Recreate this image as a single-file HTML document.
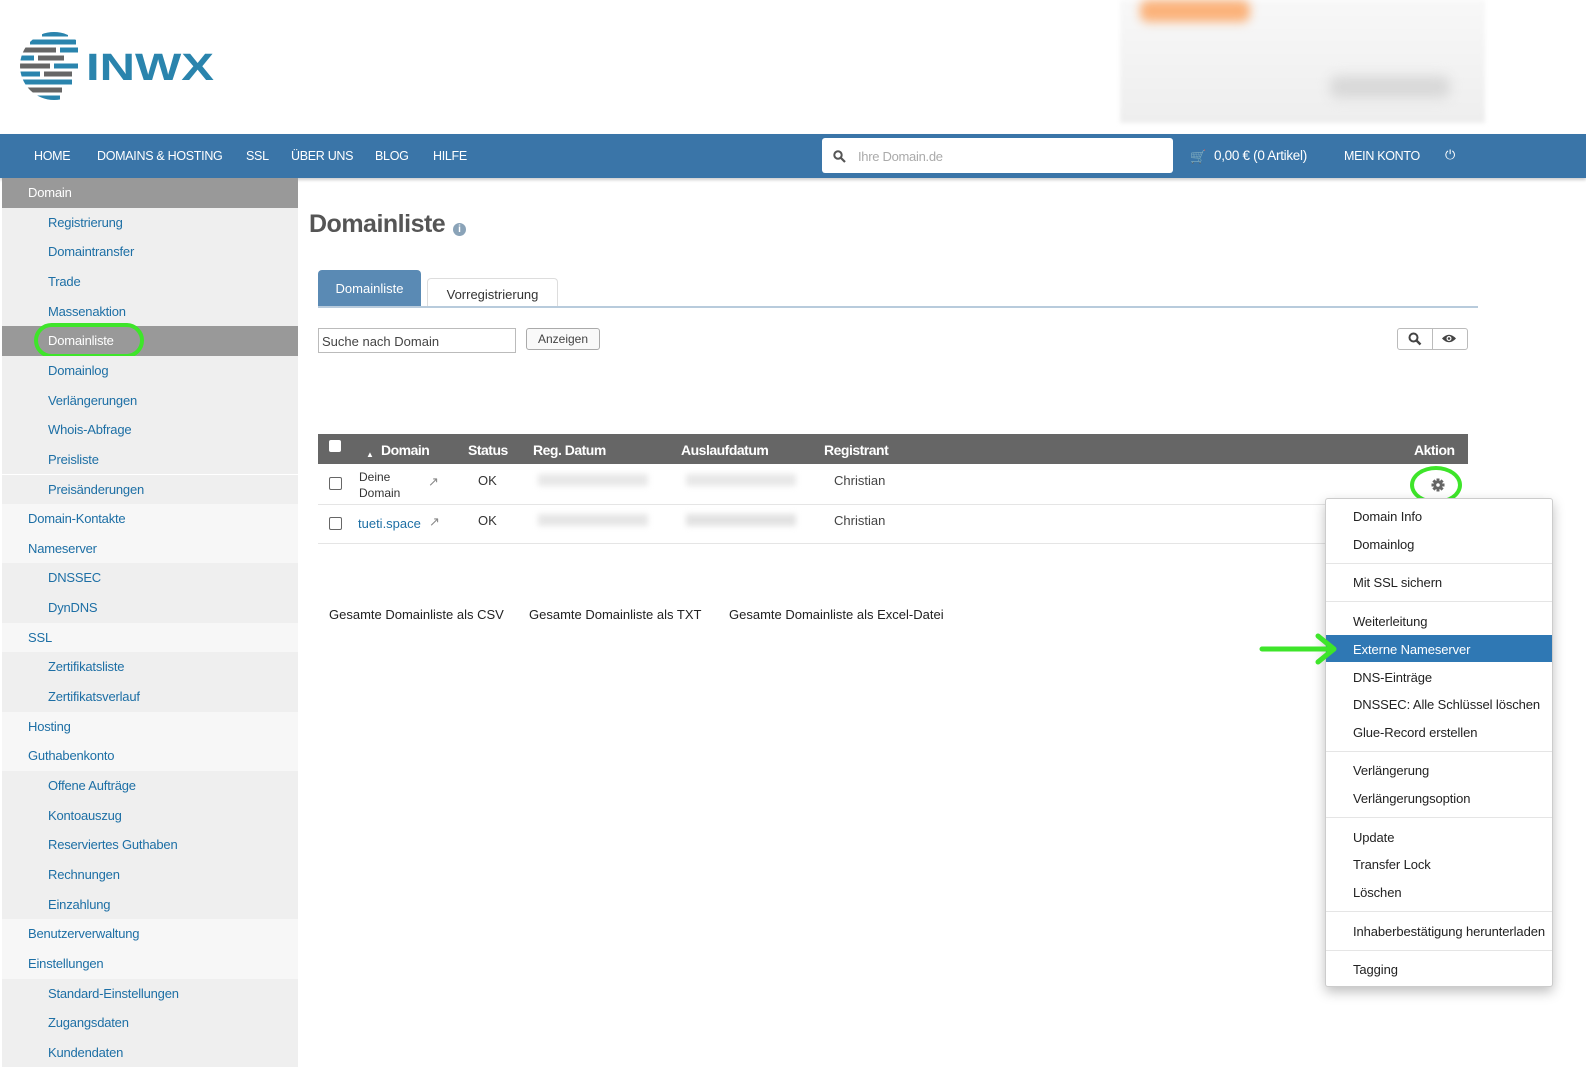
<!DOCTYPE html>
<html><head><meta charset="utf-8"><style>
*{margin:0;padding:0;box-sizing:border-box}
body{width:1586px;height:1083px;background:#fff;font-family:"Liberation Sans",sans-serif;position:relative;overflow:hidden;color:#333}
.a{position:absolute;white-space:nowrap}
.nav{position:absolute;left:0;top:134px;width:1586px;height:44px;background:#3a75a8;box-shadow:0 2px 3px rgba(0,0,0,.2)}
.nav span{position:absolute;top:15px;color:#fff;font-size:12.5px;letter-spacing:-.3px}
.sb{position:absolute;left:2px;width:296px;height:29.65px;font-size:13px;color:#1d6fa5;letter-spacing:-.2px;line-height:29.65px}
.s1{background:#f7f7f7;padding-left:26px}
.s2{background:#efefef;padding-left:46px}
.th{position:absolute;top:434px;left:318px;width:1150px;height:30px;background:#666}
.th span{position:absolute;top:8px;color:#fff;font-size:14px;font-weight:bold;letter-spacing:-.5px}
.dd{position:absolute;left:1325px;top:498px;width:228px;height:489px;background:#fff;border:1px solid #ccc;border-radius:3px;box-shadow:0 5px 12px rgba(0,0,0,.25)}
.dd span{position:absolute;left:27px;font-size:13px;color:#222;white-space:nowrap;letter-spacing:-.1px}
.dd i{position:absolute;left:0;width:226px;height:1px;background:#e5e5e5}
</style></head><body>
<!-- logo -->
<svg class="a" style="left:20px;top:30px" width="200" height="72" viewBox="0 0 200 72">
<defs><clipPath id="g"><circle cx="34" cy="36" r="34"/></clipPath></defs>
<g stroke-width="5" clip-path="url(#g)">
<path d="M22 4 H48" stroke="#2a84ad"/><path d="M10 12 H56" stroke="#2a84ad"/>
<path d="M0 20 H36" stroke="#666"/><path d="M40 20 H58" stroke="#2a84ad"/>
<path d="M0 28 H14" stroke="#2a84ad"/><path d="M18 28 H44" stroke="#666"/>
<path d="M0 36 H30" stroke="#666"/><path d="M34 36 H58" stroke="#2a84ad"/>
<path d="M0 44 H20" stroke="#2a84ad"/><path d="M24 44 H52" stroke="#666"/>
<path d="M0 52 H52" stroke="#2a84ad"/><path d="M0 60 H42" stroke="#666"/><path d="M0 68 H40" stroke="#2a84ad"/>
</g>
<text x="66" y="50" font-family="Liberation Sans" font-weight="bold" font-size="38" fill="#2a84ad" textLength="128" lengthAdjust="spacingAndGlyphs">INWX</text>
</svg>
<!-- blurred ad -->
<div class="a" style="left:1120px;top:0;width:365px;height:123px;background:linear-gradient(#f8f8f8,#eee);filter:blur(2px)"></div>
<div class="a" style="left:1140px;top:0;width:110px;height:22px;background:#fbb27a;border-radius:8px;filter:blur(5px)"></div>
<div class="a" style="left:1330px;top:76px;width:120px;height:22px;background:#d8d8d8;border-radius:8px;filter:blur(6px)"></div>
<div class="nav">
<span style="left:34px">HOME</span><span style="left:97px">DOMAINS &amp; HOSTING</span><span style="left:246px">SSL</span><span style="left:291px">ÜBER UNS</span><span style="left:375px">BLOG</span><span style="left:433px">HILFE</span>
<div class="a" style="left:822px;top:4px;width:351px;height:35px;background:#fff;border-radius:3px"></div>
<svg class="a" style="left:833px;top:16px" width="13" height="13" viewBox="0 0 13 13"><circle cx="5" cy="5" r="3.7" fill="none" stroke="#555" stroke-width="2"/><path d="M8 8 L12 12" stroke="#555" stroke-width="2.2"/></svg>
<span style="left:858px;color:#aaa;font-size:13px;top:15px">Ihre Domain.de</span>
<span style="left:1190px;font-size:13px">&#128722;</span>
<span style="left:1214px;font-size:13.5px;top:14px">0,00 € (0 Artikel)</span>
<span style="left:1344px">MEIN KONTO</span><span style="left:1445px;font-size:13px;top:13px">⏻</span>
</div>
<!-- sidebar -->
<div class="sb" style="top:178px;background:#999;color:#fff;padding-left:26px">Domain</div>
<div class="sb s2" style="top:207.65px">Registrierung</div>
<div class="sb s2" style="top:237.3px">Domaintransfer</div>
<div class="sb s2" style="top:266.95px">Trade</div>
<div class="sb s2" style="top:296.6px">Massenaktion</div>
<div class="sb s2" style="top:326.25px;background:#999;color:#fff">Domainliste</div>
<div class="a" style="left:34px;top:323px;width:110px;height:35px;border:4px solid #3ee52a;border-radius:18px"></div>
<div class="sb s2" style="top:355.9px">Domainlog</div>
<div class="sb s2" style="top:385.55px">Verlängerungen</div>
<div class="sb s2" style="top:415.2px">Whois-Abfrage</div>
<div class="sb s2" style="top:444.85px">Preisliste</div>
<div class="sb s2" style="top:474.5px">Preisänderungen</div>
<div class="sb s1" style="top:504.15px">Domain-Kontakte</div>
<div class="sb s1" style="top:533.8px">Nameserver</div>
<div class="sb s2" style="top:563.45px">DNSSEC</div>
<div class="sb s2" style="top:593.1px">DynDNS</div>
<div class="sb s1" style="top:622.75px">SSL</div>
<div class="sb s2" style="top:652.4px">Zertifikatsliste</div>
<div class="sb s2" style="top:682.05px">Zertifikatsverlauf</div>
<div class="sb s1" style="top:711.7px">Hosting</div>
<div class="sb s1" style="top:741.35px">Guthabenkonto</div>
<div class="sb s2" style="top:771px">Offene Aufträge</div>
<div class="sb s2" style="top:800.65px">Kontoauszug</div>
<div class="sb s2" style="top:830.3px">Reserviertes Guthaben</div>
<div class="sb s2" style="top:859.95px">Rechnungen</div>
<div class="sb s2" style="top:889.6px">Einzahlung</div>
<div class="sb s1" style="top:919.25px">Benutzerverwaltung</div>
<div class="sb s1" style="top:948.9px">Einstellungen</div>
<div class="sb s2" style="top:978.55px">Standard-Einstellungen</div>
<div class="sb s2" style="top:1008.2px">Zugangsdaten</div>
<div class="sb s2" style="top:1037.85px">Kundendaten</div>
<!-- main -->
<div class="a" style="left:309px;top:210px;font-size:25px;font-weight:bold;color:#555;letter-spacing:-.5px">Domainliste</div>
<div class="a" style="left:453px;top:223px;width:13px;height:13px;border-radius:50%;background:#8aa3b8;color:#fff;font-size:10px;font-weight:bold;text-align:center;line-height:13px">i</div>
<div class="a" style="left:318px;top:270px;width:103px;height:37px;background:#5a8ab4;border-radius:4px 4px 0 0;color:#fff;font-size:13px;text-align:center;line-height:38px">Domainliste</div>
<div class="a" style="left:427px;top:278px;width:131px;height:29px;border:1px solid #ddd;border-bottom:none;border-radius:4px 4px 0 0;font-size:13px;text-align:center;line-height:32px;color:#333">Vorregistrierung</div>
<div class="a" style="left:318px;top:306px;width:1160px;height:2px;background:#b8cbdc"></div>
<div class="a" style="left:318px;top:328px;width:198px;height:25px;border:1px solid #bbb;font-size:13px;line-height:25px;padding-left:3px;color:#444">Suche nach Domain</div>
<div class="a" style="left:526px;top:328px;width:74px;height:22px;border:1px solid #aaa;border-radius:3px;font-size:12px;text-align:center;line-height:21px;color:#444;background:#f9f9f9">Anzeigen</div>
<div class="a" style="left:1397px;top:328px;width:71px;height:22px;border:1px solid #bbb;border-radius:3px"></div>
<div class="a" style="left:1432px;top:328px;width:1px;height:22px;background:#bbb"></div>
<svg class="a" style="left:1408px;top:332px" width="14" height="14" viewBox="0 0 14 14"><circle cx="5.5" cy="5.5" r="4" fill="none" stroke="#444" stroke-width="2"/><path d="M8.5 8.5 L12.5 12.5" stroke="#444" stroke-width="2.4"/></svg>
<svg class="a" style="left:1441px;top:333px" width="16" height="11" viewBox="0 0 16 11"><path d="M1 5.5 Q8 -2 15 5.5 Q8 13 1 5.5Z" fill="#444"/><circle cx="8" cy="5.5" r="2.5" fill="#fff"/><circle cx="8" cy="5.5" r="1.3" fill="#444"/></svg>
<div class="th">
<div class="a" style="left:11px;top:6px;width:12px;height:12px;background:#fff;border-radius:2px"></div>
<span style="left:48px;top:16px;font-size:8px">▲</span>
<span style="left:63px">Domain</span><span style="left:150px">Status</span><span style="left:215px">Reg. Datum</span><span style="left:363px">Auslaufdatum</span><span style="left:506px">Registrant</span><span style="left:1096px">Aktion</span>
</div>
<div class="a" style="left:318px;top:504px;width:1010px;height:1px;background:#e5e5e5"></div>
<div class="a" style="left:318px;top:543px;width:1010px;height:1px;background:#e5e5e5"></div>
<div class="a" style="left:329px;top:477px;width:13px;height:13px;border:1px solid #666;border-radius:2px"></div>
<div class="a" style="left:329px;top:517px;width:13px;height:13px;border:1px solid #666;border-radius:2px"></div>
<div class="a" style="left:359px;top:469px;font-size:12px;line-height:16px;color:#333">Deine<br>Domain</div>
<div class="a" style="left:358px;top:516px;font-size:13px;color:#1d6fa5">tueti.space</div>
<div class="a" style="left:428px;top:474px;font-size:13px;color:#888">↗</div>
<div class="a" style="left:429px;top:514px;font-size:13px;color:#888">↗</div>
<div class="a" style="left:478px;top:473px;font-size:13px">OK</div>
<div class="a" style="left:478px;top:513px;font-size:13px">OK</div>
<div class="a" style="left:538px;top:474px;width:110px;height:12px;background:#e8e8e8;filter:blur(3px)"></div>
<div class="a" style="left:686px;top:474px;width:110px;height:12px;background:#e8e8e8;filter:blur(3px)"></div>
<div class="a" style="left:538px;top:514px;width:110px;height:12px;background:#e6e6e6;filter:blur(3px)"></div>
<div class="a" style="left:686px;top:514px;width:110px;height:12px;background:#e2e2e2;filter:blur(3px)"></div>
<div class="a" style="left:834px;top:473px;font-size:13px;color:#444">Christian</div>
<div class="a" style="left:834px;top:513px;font-size:13px;color:#444">Christian</div>
<svg class="a" style="left:1431px;top:478px" width="14" height="14" viewBox="0 0 14 14"><g fill="#666"><circle cx="7" cy="7" r="4.5"/><rect x="5.5" y="0.5" width="3" height="13"/><rect x="0.5" y="5.5" width="13" height="3"/><rect x="5.5" y="0.5" width="3" height="13" transform="rotate(45 7 7)"/><rect x="5.5" y="0.5" width="3" height="13" transform="rotate(-45 7 7)"/></g><circle cx="7" cy="7" r="1.8" fill="#fff"/></svg>
<div class="a" style="left:1410px;top:466px;width:52px;height:38px;border:4px solid #3ee52a;border-radius:50%"></div>
<div class="a" style="left:329px;top:607px;font-size:13px;color:#222">Gesamte Domainliste als CSV</div>
<div class="a" style="left:529px;top:607px;font-size:13px;color:#222">Gesamte Domainliste als TXT</div>
<div class="a" style="left:729px;top:607px;font-size:13px;color:#222">Gesamte Domainliste als Excel-Datei</div>
<!-- dropdown -->
<div class="dd">
<span style="top:10px">Domain Info</span><span style="top:38px">Domainlog</span>
<i style="top:64px"></i>
<span style="top:76px">Mit SSL sichern</span>
<i style="top:102px"></i>
<span style="top:115px">Weiterleitung</span>
<div class="a" style="left:0;top:136px;width:226px;height:27px;background:#2f78b4"></div>
<span style="top:143px;color:#fff">Externe Nameserver</span>
<span style="top:171px">DNS-Einträge</span><span style="top:198px">DNSSEC: Alle Schlüssel löschen</span><span style="top:226px">Glue-Record erstellen</span>
<i style="top:252px"></i>
<span style="top:264px">Verlängerung</span><span style="top:292px">Verlängerungsoption</span>
<i style="top:318px"></i>
<span style="top:331px">Update</span><span style="top:358px">Transfer Lock</span><span style="top:386px">Löschen</span>
<i style="top:412px"></i>
<span style="top:425px">Inhaberbestätigung herunterladen</span>
<i style="top:451px"></i>
<span style="top:463px">Tagging</span>
</div>
<svg class="a" style="left:1258px;top:632px" width="82" height="34" viewBox="0 0 82 34"><path d="M4 17 H74 M60 4 L76 17 L60 30" fill="none" stroke="#3ee52a" stroke-width="5" stroke-linecap="round" stroke-linejoin="round"/></svg>
</body></html>
